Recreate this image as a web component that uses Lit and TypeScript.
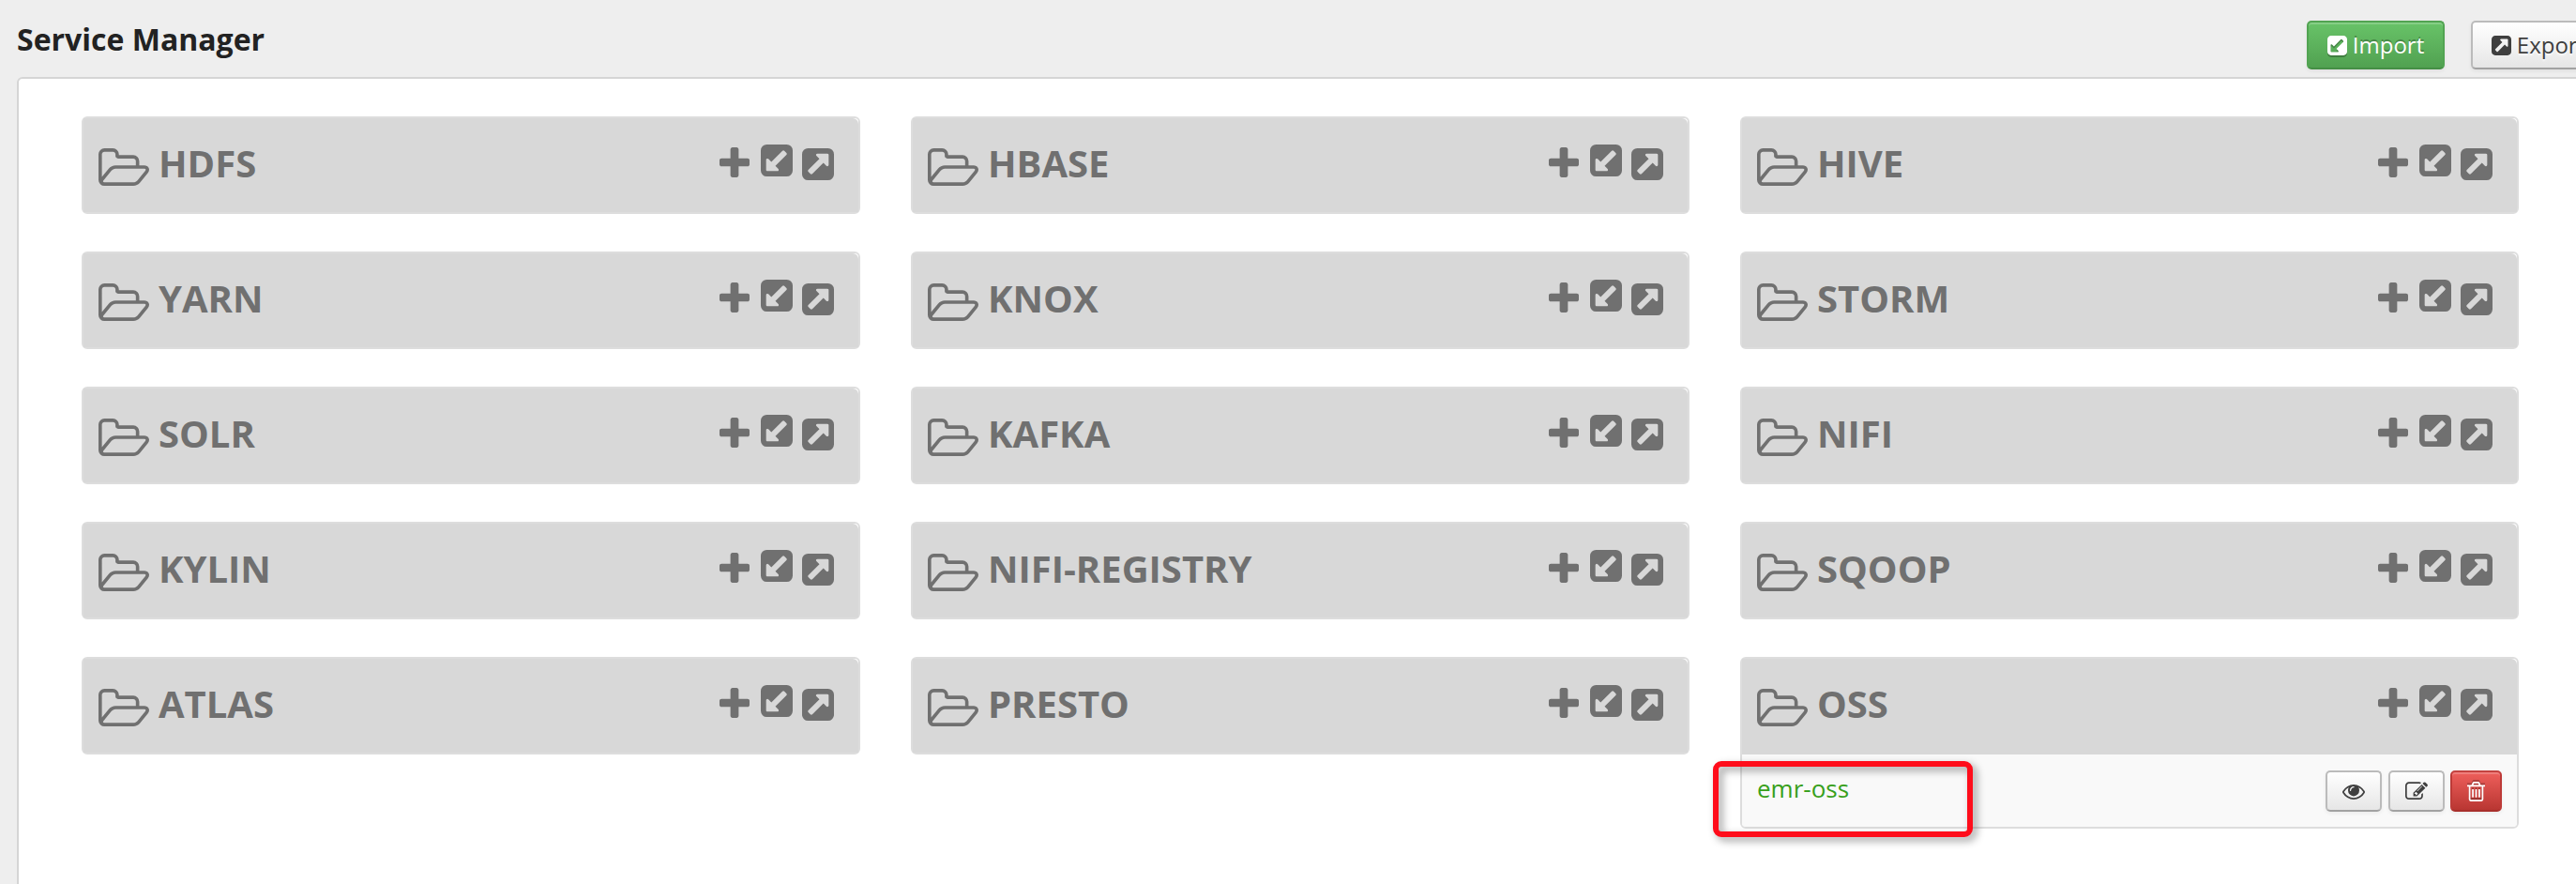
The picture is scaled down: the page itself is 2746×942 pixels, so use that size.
import { LitElement, html, css, svg } from "lit";
import { customElement, property } from "lit/decorators.js";
import { classMap } from "lit/directives/class-map.js";

interface Glyph {
  box: string;
  d: string;
}

const GLYPHS: Record<string, Glyph> = {
  folder: {
    box: "0 0 1909 1408",
    d: "M1781 803q0-35-53-35h-1088q-40 0-85.5 21.5t-71.5 52.5l-294 363q-18 24-18 40 0 35 53 35h1088q40 0 86-22t71-53l294-363q18-22 18-39zM640 640h768v-160q0-40-28-68t-68-28h-576q-40 0-68-28t-28-68v-64q0-40-28-68t-68-28h-320q-40 0-68 28t-28 68v853l256-315q44-53 116-87.500t140-34.500zM1909 803q0 62-46 120l-295 363q-43 53-116 87.500t-140 34.500h-1088q-92 0-158-66t-66-158v-960q0-92 66-158t158-66h320q92 0 158 66t66 158v32h544q92 0 158 66t66 158v160h192q54 0 99 24.500t67 70.500q15 32 15 68z",
  },
  plus: {
    box: "192 128 1408 1408",
    d: "M1600 736v192q0 40-28 68t-68 28h-416v416q0 40-28 68t-68 28h-192q-40 0-68-28t-28-68v-416h-416q-40 0-68-28t-28-68v-192q0-40 28-68t68-28h416v-416q0-40 28-68t68-28h192q40 0 68 28t28 68v416h416q40 0 68 28t28 68z",
  },
  square: {
    box: "128 128 1536 1536",
    d: "M1408 928v-480q0-26-19-45t-45-19h-480q-42 0-59 39-17 41 14 70l144 144-534 534q-19 19-19 45t19 45l102 102q19 19 45 19t45-19l534-534 144 144q18 19 45 19 12 0 25-5 39-17 39-59zm256-512v960q0 119-84.500 203.500t-203.500 84.500h-960q-119 0-203.500-84.500t-84.500-203.500v-960q0-119 84.500-203.500t203.500-84.500h960q119 0 203.500 84.500t84.500 203.500z",
  },
  eye: {
    box: "0 384 1792 1152",
    d: "M1664 960q-152-236-381-353 61 104 61 225 0 185-131.500 316.500t-316.500 131.500-316.500-131.500-131.500-316.500q0-121 61-225-229 117-381 353 133 205 333.500 326.500t434.500 121.500 434.500-121.500 333.500-326.500zm-720-384q0-20-14-34t-34-14q-125 0-214.500 89.500t-89.500 214.500q0 20 14 34t34 14 34-14 14-34q0-86 61-147t147-61q20 0 34-14t14-34zm848 384q0 34-20 69-140 230-376.500 368.500t-499.500 138.500-499.500-139-376.500-368q-20-35-20-69t20-69q140-229 376.500-368t499.500-139 499.500 139 376.500 368q20 35 20 69z",
  },
  edit: {
    box: "0 100 1792 1436",
    d: "M888 1184l116-116-152-152-116 116v56h96v96h56zm440-720q-16-16-33 1l-350 350q-17 17-1 33t33-1l350-350q17-17 1-33zm80 594v190q0 119-84.500 203.500t-203.500 84.500h-832q-119 0-203.500-84.500t-84.500-203.500v-832q0-119 84.500-203.500t203.500-84.500h832q63 0 117 25 15 7 18 23 3 17-9 29l-49 49q-14 14-32 8-23-6-45-6h-832q-66 0-113 47t-47 113v832q0 66 47 113t113 47h832q66 0 113-47t47-113v-126q0-13 9-22l64-64q15-15 35-7t20 29zm-96-738l288 288-672 672h-288v-288zm444 132l-92 92-288-288 92-92q28-28 68-28t68 28l152 152q28 28 28 68t-28 68z",
  },
  trash: {
    box: "192 128 1408 1536",
    d: "M704 736v576q0 14-9 23t-23 9h-64q-14 0-23-9t-9-23v-576q0-14 9-23t23-9h64q14 0 23 9t9 23zm256 0v576q0 14-9 23t-23 9h-64q-14 0-23-9t-9-23v-576q0-14 9-23t23-9h64q14 0 23 9t9 23zm256 0v576q0 14-9 23t-23 9h-64q-14 0-23-9t-9-23v-576q0-14 9-23t23-9h64q14 0 23 9t9 23zm128 724v-948h-896v948q0 22 7 40.500t14.500 27 10.500 8.500h832q3 0 10.500-8.500t14.500-27 7-40.500zm-672-1076h448l-48-117q-7-9-17-11h-317q-10 2-17 11zm928 32v64q0 14-9 23t-23 9h-96v948q0 83-47 143.500t-113 60.500h-832q-66 0-113-58.500t-47-141.500v-952h-96q-14 0-23-9t-9-23v-64q0-14 9-23t23-9h309l70-167q15-37 54-63t79-26h320q40 0 79 26t54 63l70 167h309q14 0 23 9t9 23z",
  },
};

const icon = (name: string, cls: string) => {
  const g = GLYPHS[name];
  return html`<svg class=${cls} viewBox=${g.box} preserveAspectRatio="none" aria-hidden="true">
    ${svg`<path fill="currentColor" d=${g.d}></path>`}
  </svg>`;
};

const buttonStyles = css`
  * {
    box-sizing: border-box;
  }
  svg {
    display: block;
    flex: none;
    overflow: visible;
  }
  .turned {
    transform: rotate(180deg);
  }
  .btn {
    display: flex;
    align-items: center;
    justify-content: center;
    flex: none;
    margin: 0;
    padding: 0;
    border: 2px solid #bbb;
    border-bottom-color: #a2a2a2;
    border-radius: 5px;
    color: #3f3f3f;
    font: 400 24px/36px "Open Sans", sans-serif;
    text-shadow: 0 2px 2px rgba(255, 255, 255, 0.75);
    white-space: nowrap;
    background: linear-gradient(#fff, #e6e6e6);
    box-shadow: inset 0 2px 0 rgba(255, 255, 255, 0.2), 0 2px 4px rgba(0, 0, 0, 0.06);
  }
  .btn.success {
    color: #fff;
    border-color: #52a452 #52a452 #458f45;
    background: linear-gradient(#68c368, #51a151);
    text-shadow: 0 -2px 0 rgba(0, 0, 0, 0.25);
  }
  .btn.danger {
    color: #fff;
    border-color: #c44340 #bd3a37 #a9302c;
    background: linear-gradient(#ee5f5b, #b93632);
  }
  .btn.danger svg {
    filter: drop-shadow(0 -2px 0 rgba(0, 0, 0, 0.25));
  }
`;

@customElement("service-card")
export class ServiceCard extends LitElement {
  @property() name = "";
  @property({ attribute: false }) services: string[] = [];

  static styles = [
    buttonStyles,
    css`
      :host {
        display: block;
        position: relative;
        font-family: "Open Sans", sans-serif;
      }
      .card {
        border: 2px solid #ddd;
        border-radius: 6px;
        background: #fff;
      }
      .head {
        display: flex;
        align-items: flex-start;
        height: 100px;
        padding: 0 26px 0 16px;
        background: #d8d8d8;
        border-radius: 0 6px 0 0;
        color: #707070;
      }
      .card.filled .head {
        height: 102px;
      }
      .folder {
        width: 54px;
        height: 40px;
        margin-top: 32px;
      }
      .name {
        flex: 1;
        margin: 20px 0 0 10px;
        font-size: 40px;
        line-height: 56px;
        font-weight: 700;
      }
      .tools {
        display: flex;
        align-items: flex-start;
      }
      .plus {
        width: 32px;
        height: 32px;
        margin: 31px 12px 0 0;
      }
      .in {
        width: 34px;
        height: 34px;
        margin: 28px 10px 0 0;
      }
      .out {
        width: 34px;
        height: 34px;
        margin: 31.500px 0 0 0;
      }
      .row {
        display: flex;
        align-items: flex-start;
        height: 77px;
        padding: 17px 16px 0 16px;
        background: #f9f9f9;
        border-radius: 0 0 4px 4px;
      }
      .link {
        flex: 1;
        margin-top: 1px;
        color: #38a01b;
        font-size: 26px;
        line-height: 36px;
        text-decoration: none;
      }
      .actions {
        display: flex;
      }
      .btn {
        width: 60px;
        height: 44px;
        margin-right: 7px;
      }
      .btn.danger {
        width: 55px;
        margin: 0 0 0 -1px;
      }
      .eye {
        width: 24px;
        height: 16px;
        margin-top: 2px;
      }
      .edit {
        width: 24px;
        height: 19px;
        margin-top: -1px;
      }
      .trash {
        width: 19px;
        height: 21px;
      }
      .mark {
        position: absolute;
        left: -29px;
        top: 111px;
        width: 277px;
        height: 81px;
        border: 6px solid #ff0d1b;
        border-radius: 9px;
        filter: drop-shadow(4px 4px 4px rgba(0, 0, 0, 0.4));
      }
    `,
  ];

  render() {
    const filled = this.services.length > 0;
    return html`
      <section class=${classMap({ card: true, filled })}>
        <header class="head">
          ${icon("folder", "folder")}
          <div class="name">${this.name}</div>
          <div class="tools">
            ${icon("plus", "plus")} ${icon("square", "in turned")} ${icon("square", "out")}
          </div>
        </header>
        ${this.services.map(
          (s) => html`<div class="row">
            <a class="link">${s}</a>
            <div class="actions">
              <button class="btn" aria-label="View">${icon("eye", "eye")}</button>
              <button class="btn" aria-label="Edit">${icon("edit", "edit")}</button>
              <button class="btn danger" aria-label="Delete">${icon("trash", "trash")}</button>
            </div>
          </div>`
        )}
      </section>
      ${filled ? html`<div class="mark"></div>` : ""}
    `;
  }
}

@customElement("app-root")
export class AppRoot extends LitElement {
  private names = [
    "HDFS", "HBASE", "HIVE",
    "YARN", "KNOX", "STORM",
    "SOLR", "KAFKA", "NIFI",
    "KYLIN", "NIFI-REGISTRY", "SQOOP",
    "ATLAS", "PRESTO", "OSS",
  ];

  static styles = [
    buttonStyles,
    css`
      :host {
        display: block;
        height: 942px;
        overflow: hidden;
        background: #eee;
        font-family: "Open Sans", sans-serif;
      }
      .page {
        width: 2802px;
        padding-left: 18px;
      }
      .bar {
        display: flex;
        align-items: flex-start;
        height: 82px;
      }
      .title {
        flex: none;
        width: 2441px;
        margin: 20px 0 0;
        color: #222;
        font-size: 32px;
        line-height: 44px;
        font-weight: 700;
      }
      .btn {
        width: 144px;
        height: 52px;
        margin: 22px 0 0;
        gap: 6px;
      }
      .btn.success {
        width: 147px;
        margin-right: 28px;
      }
      .btn svg {
        width: 21px;
        height: 21px;
      }
      .success svg {
        filter: drop-shadow(0 -2px 0 rgba(0, 0, 0, 0.25));
      }
      .panel {
        height: 900px;
        padding: 40px 65px;
        border: 2px solid #d5d5d5;
        border-radius: 6px;
        background: #fff;
      }
      .grid {
        display: grid;
        grid-template-columns: repeat(3, 830px);
        gap: 40px 54px;
        align-items: start;
        padding-left: 2px;
      }
    `,
  ];

  render() {
    return html`
      <div class="page">
        <div class="bar">
          <h1 class="title">Service Manager</h1>
          <button class="btn success">${icon("square", "turned")}<span>Import</span></button>
          <button class="btn">${icon("square", "")}<span>Export</span></button>
        </div>
        <main class="panel">
          <div class="grid">
            ${this.names.map(
              (n) => html`<service-card .name=${n} .services=${n === "OSS" ? ["emr-oss"] : []}></service-card>`
            )}
          </div>
        </main>
      </div>
    `;
  }
}
